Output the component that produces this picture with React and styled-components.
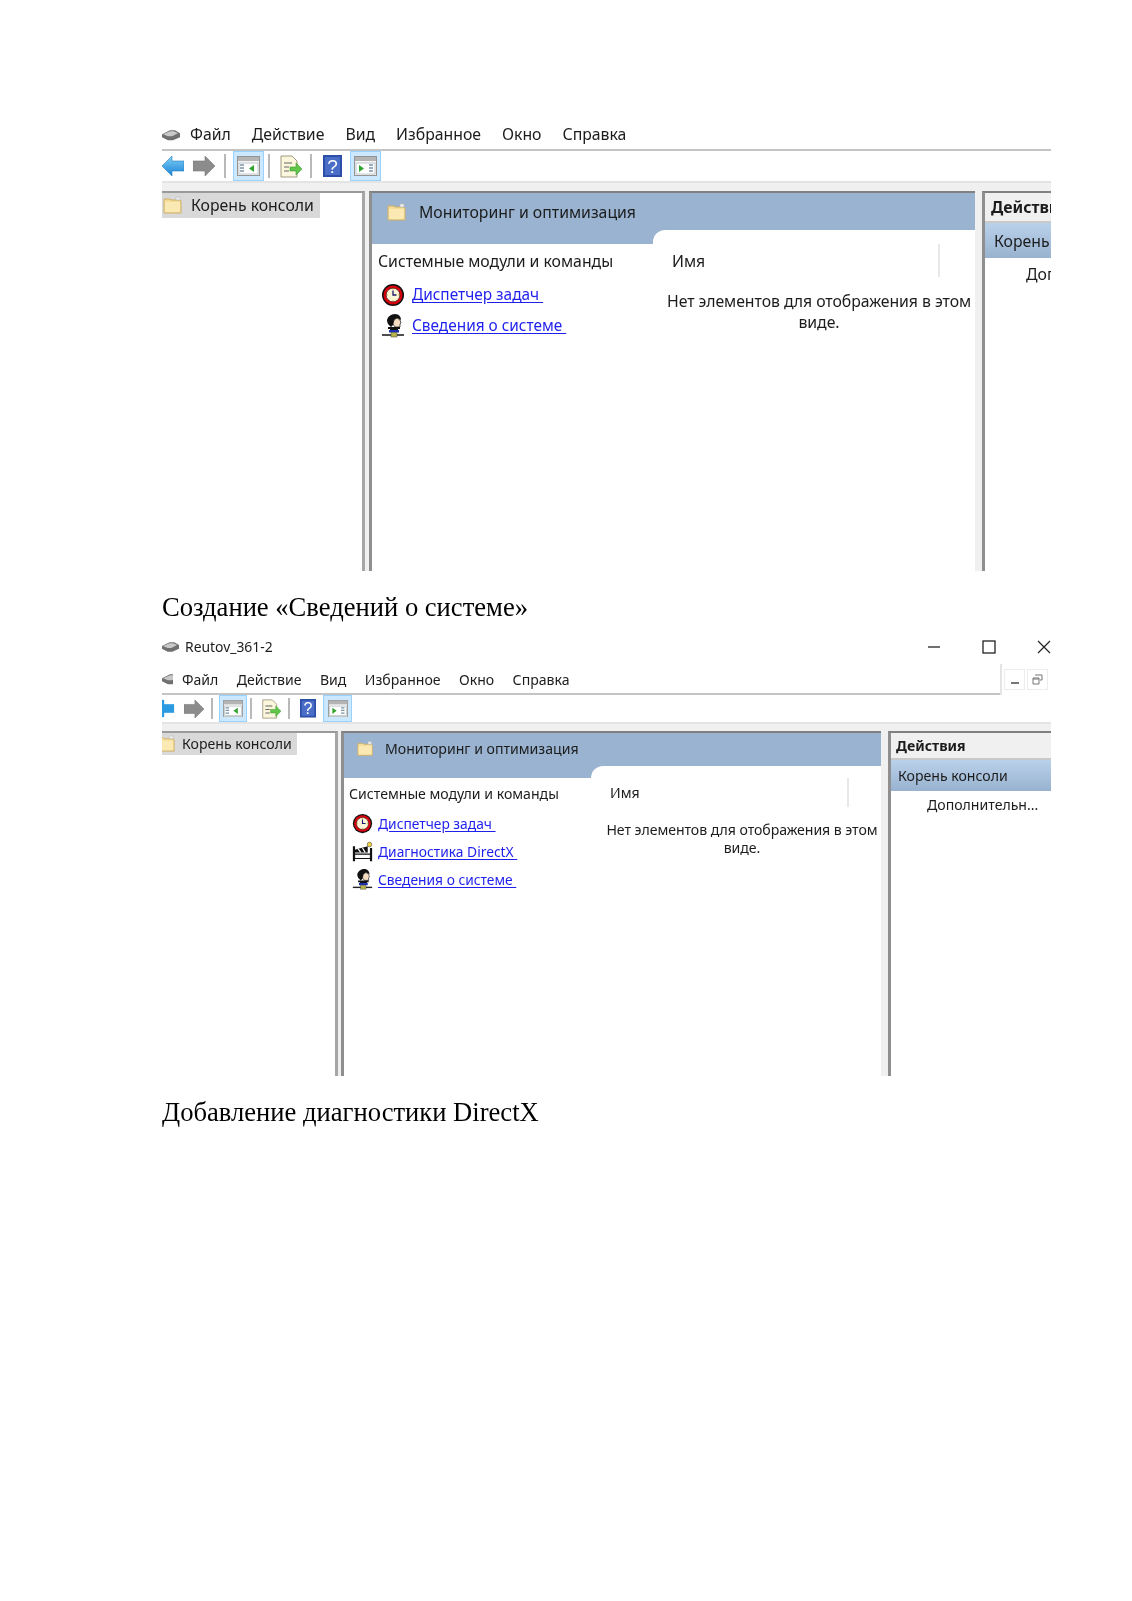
import React from 'react';
import styled, { createGlobalStyle, ThemeProvider } from 'styled-components';

const Global = createGlobalStyle`
  html, body { margin: 0; padding: 0; background: #fff; }
  * { box-sizing: border-box; }
`;

const large = {
  font: 15.8, linkFont: 15.4, menuGap: 21, menuH: 27, menuTop: 0, menuBottom: 3, menuIcon: 18, menuIconGap: 10,
  toolH: 30, bandH: 10, panelH: 380, treeCol: 203, centerCol: 606, gap1: 4, gap2: 7,
  treeW: 158, treeH: 25, treeText: 8, treeFolder: 20, treeFolderLeft: 1,
  headH: 37, headBottom: 0, headLeft: 15, headFolder: 20, headGap: 12, tail: 14, notch: 12,
  listW: 281, listLeft: 6, listTop: 6, sectionH: 22, rowH: 31, rowIcon: 24, rowGap: 7, rowIconLeft: 3, firstRow: 7,
  nameLeft: 19, nameH: 33, nameW: 287, emptyTop: 14, emptyLine: 21, emptyLeft: 10,
  actH: 27, actRowH: 35, actText: 9, actHeadText: 6, moreLeft: 41, moreTop: 5,
};
const small = {
  font: 14.1, linkFont: 13.8, menuGap: 18.4, menuH: 35, menuTop: 6, menuBottom: 0, menuIcon: 11, menuIconGap: 9,
  toolH: 27, bandH: 9, panelH: 345, treeCol: 176, centerCol: 540, gap1: 3, gap2: 7,
  treeW: 135, treeH: 22, treeText: 6, treeFolder: 19, treeFolderLeft: -5,
  headH: 33, headBottom: 3, headLeft: 13, headFolder: 17, headGap: 11, tail: 12, notch: 12,
  listW: 247, listLeft: 5, listTop: 6, sectionH: 20, rowH: 28, rowIcon: 21, rowGap: 5, rowIconLeft: 3, firstRow: 5,
  nameLeft: 19, nameH: 29, nameW: 258, emptyTop: 14, emptyLine: 18, emptyLeft: 12,
  actH: 24, actRowH: 31, actText: 7, actHeadText: 5, moreLeft: 36, moreTop: 4,
};

const Page = styled.div`
  width: 1132px;
  height: 1601px;
  padding: 124px 81px 0 162px;
  background: #fff;
  overflow: hidden;
  font-family: "Noto Sans", "Open Sans", sans-serif;
  filter: blur(0.35px);
`;
const WindowFrame = styled.section`
  width: 889px;
  overflow: hidden;
  color: #1c1c1c;
  font-size: ${p => p.theme.font}px;
`;
const TitleBar = styled.div`
  height: 26px;
  display: flex;
  align-items: center;
  padding-bottom: 1px;
  font-size: 13.9px;
`;
const TitleName = styled.span`
  margin-left: 6px;
  flex: 1;
`;
const CaptionButton = styled.button`
  width: ${p => p.$w}px;
  height: 22px;
  border: 0;
  padding: 0;
  background: none;
  display: flex;
  align-items: center;
  justify-content: ${p => (p.$end ? 'flex-end' : 'center')};
`;
const MenuBar = styled.div`
  height: ${p => p.theme.menuH}px;
  display: flex;
  align-items: center;
  border-bottom: 2px solid #c4c4c4;
  padding: ${p => p.theme.menuTop}px 0 ${p => p.theme.menuBottom}px;
  position: relative;
  line-height: 1.1;
`;
const MenuIcon = styled.span`
  display: flex;
  width: ${p => p.theme.menuIcon}px;
  margin-right: ${p => p.theme.menuIconGap}px;
  overflow: hidden;
`;
const MenuItem = styled.span`
  margin-right: ${p => p.theme.menuGap}px;
  white-space: nowrap;
`;
const MdiBox = styled.div`
  position: absolute;
  right: 0;
  top: 4px;
  bottom: -2px;
  width: 51px;
  background: #fff;
  border-left: 2px solid #e4e4e4;
  display: flex;
  gap: 2px;
  padding: 5px 0 3px 2px;
`;
const MdiBtn = styled.span`
  width: 21px;
  height: 21px;
  border: 1px solid #ececec;
  display: flex;
  align-items: center;
  justify-content: center;
`;
const ToolBar = styled.div`
  height: ${p => p.theme.toolH}px;
  display: flex;
  align-items: center;
`;
const Tool = styled.span`
  display: flex;
  align-items: center;
  justify-content: center;
  flex: none;
  width: ${p => p.$w}px;
  height: 100%;
  margin-left: ${p => p.$ml || 0}px;
  ${p => p.$on && 'background:#cce8ff;border:1px solid #99d1ff;'}
`;
const ToolSep = styled.span`
  flex: none;
  width: 2px;
  height: 80%;
  margin-left: ${p => p.$ml}px;
  background: #a8a8a8;
  opacity: 0.8;
`;
const Band = styled.div`
  height: ${p => p.theme.bandH}px;
  background: #f0f0f0;
  border-top: 2px solid #e4e4e4;
`;
const Panels = styled.div`
  height: ${p => p.theme.panelH}px;
  display: flex;
  background: #f0f0f0;
`;
const TreePane = styled.div`
  flex: none;
  width: ${p => p.theme.treeCol}px;
  background: #fff;
  border-top: 2px solid #9a9a9a;
  border-right: 3px solid #a6a6a6;
`;
const TreeRow = styled.div`
  width: ${p => p.theme.treeW}px;
  height: ${p => p.theme.treeH}px;
  padding-bottom: 2px;
  background: #d9d9d9;
  display: flex;
  align-items: center;
  overflow: hidden;
  white-space: nowrap;
`;
const TreeFolder = styled.span`
  display: flex;
  flex: none;
  margin-left: ${p => p.theme.treeFolderLeft}px;
  margin-right: ${p => p.theme.treeText}px;
`;
const CenterPane = styled.div`
  flex: none;
  width: ${p => p.theme.centerCol}px;
  margin-left: ${p => p.theme.gap1}px;
  background: #fff;
  border-top: 2px solid #808080;
  border-left: 3px solid #8f8f8f;
  display: flex;
  flex-direction: column;
`;
const ViewHead = styled.div`
  height: ${p => p.theme.headH}px;
  flex: none;
  background: #99b3d0;
  display: flex;
  align-items: center;
  padding: 0 0 ${p => p.theme.headBottom}px ${p => p.theme.headLeft}px;
  gap: ${p => p.theme.headGap}px;
`;
const ViewBody = styled.div`
  flex: 1;
  display: flex;
  background: linear-gradient(#99b3d0 ${p => p.theme.tail}px, #fff ${p => p.theme.tail}px);
`;
const ListCol = styled.div`
  flex: none;
  width: ${p => p.theme.listW}px;
`;
const HeadTail = styled.div`
  height: ${p => p.theme.tail}px;
`;
const ListInner = styled.div`
  padding: ${p => p.theme.listTop}px 0 0 ${p => p.theme.listLeft}px;
`;
const SectionTitle = styled.div`
  height: ${p => p.theme.sectionH}px;
  line-height: ${p => p.theme.sectionH}px;
  white-space: nowrap;
  margin-bottom: ${p => p.theme.firstRow}px;
`;
const LinkRow = styled.div`
  height: ${p => p.theme.rowH}px;
  display: flex;
  align-items: center;
  gap: ${p => p.theme.rowGap}px;
  padding-left: ${p => p.theme.rowIconLeft}px;
`;
const IconBox = styled.span`
  display: flex;
  flex: none;
`;
const TaskLink = styled.a`
  color: #1f1fee;
  font-size: ${p => p.theme.linkFont}px;
  text-decoration: underline;
  white-space: pre;
  text-underline-offset: 2px;
`;
const ResultCol = styled.div`
  flex: 1;
  min-width: 0;
  background: #fff;
  border-top-left-radius: ${p => p.theme.notch}px;
  padding-top: ${p => p.theme.tail}px;
`;
const NameHead = styled.div`
  height: ${p => p.theme.nameH}px;
  width: ${p => p.theme.nameW}px;
  padding-left: ${p => p.theme.nameLeft}px;
  border-right: 2px solid #e8e8e8;
  display: flex;
  align-items: center;
`;
const EmptyNote = styled.div`
  margin-top: ${p => p.theme.emptyTop}px;
  padding-left: ${p => p.theme.emptyLeft}px;
  line-height: ${p => p.theme.emptyLine}px;
  letter-spacing: -0.05px;
  text-align: center;
  white-space: nowrap;
`;
const ActionPane = styled.div`
  flex: 1;
  min-width: 0;
  margin-left: ${p => p.theme.gap2}px;
  background: #fff;
  border-top: 2px solid #808080;
  border-left: 3px solid #8f8f8f;
  white-space: nowrap;
  overflow: hidden;
`;
const ActionHead = styled.div`
  height: ${p => p.theme.actH + 3}px;
  border-bottom: 2px solid #c9c9c9;
  background: #f0f0f0;
  font-weight: 700;
  display: flex;
  align-items: center;
  padding-left: ${p => p.theme.actHeadText}px;
`;
const ActionRow = styled.div`
  height: ${p => p.theme.actRowH}px;
  background: linear-gradient(#bad1ea, #98b2cf);
  display: flex;
  align-items: center;
  padding-left: ${p => p.theme.actText}px;
`;
const ActionMore = styled.div`
  padding: ${p => p.theme.moreTop}px 0 0 ${p => p.theme.moreLeft}px;
`;
const PageCaption = styled.p`
  margin: ${p => p.$top}px 0 ${p => p.$bottom}px;
  font-family: "Liberation Serif", "Times New Roman", serif;
  font-size: 26.6px;
  line-height: 30px;
  color: #000;
`;

const Folder = ({ s }) => (
  <svg width={s} height={s} viewBox="0 0 20 20">
    <path d="M1 4h6l1 1h9l1 1v12H1z" fill="#f6dd97" stroke="#cdb06a" />
    <path d="M2 7h15v10H2z" fill="#fbe9b4" />
    <path d="M13 2h4v3h-4z" fill="#eee" stroke="#bbb" strokeWidth=".6" />
  </svg>
);
const Disk = ({ w }) => (
  <svg width={w} height={w * 0.7} viewBox="0 0 18 12" style={{ flex: 'none' }}>
    <path d="M0 5 8 1h5l5 3v4l-7 3H6L0 8z" fill="#6f6f6f" />
    <path d="M1 5l7-3h4l4 2-6 3H6z" fill="#c8c8c8" />
  </svg>
);
const Back = ({ w }) => (
  <svg width={w} height={w} viewBox="0 0 22 22">
    <defs>
      <linearGradient id="bk" x1="0" y1="0" x2="0" y2="1">
        <stop offset="0" stopColor="#7fd0f7" />
        <stop offset="1" stopColor="#1b83d6" />
      </linearGradient>
    </defs>
    <path d="M0 11 10 1v5h12v10H10v5z" fill="url(#bk)" stroke="#2a7fc4" strokeWidth=".6" />
  </svg>
);
const Forward = ({ w }) => (
  <svg width={w} height={w} viewBox="0 0 22 22">
    <path d="M22 11 12 1v5H0v10h12v5z" fill="#8c8c8c" stroke="#777" strokeWidth=".6" />
  </svg>
);
const Pane = ({ w, right }) => (
  <svg width={w} height={w * 0.87} viewBox="0 0 23 20">
    <rect x=".5" y=".5" width="22" height="19" fill="#f4f4f4" stroke="#949494" />
    <rect x="1" y="1" width="21" height="4" fill="#b4b4b4" />
    <rect x="2" y="7" width="19" height="11" fill="#fff" stroke="#a8b4b8" strokeWidth=".7" />
    {right ? (
      <>
        <path d="M5 9v7l5-3.500z" fill="#2fa52f" />
        <path d="M15 9h4M15 12h4M15 15h4" stroke="#7a94a8" strokeWidth="1.500" />
      </>
    ) : (
      <>
        <path d="M3 9h4M3 12h4M3 15h4" stroke="#7a94a8" strokeWidth="1.500" />
        <path d="M17 9v7l-5-3.500z" fill="#2fa52f" />
      </>
    )}
  </svg>
);
const Export = ({ w }) => (
  <svg width={w} height={w} viewBox="0 0 23 23">
    <path d="M2 1h11l5 5v16H2z" fill="#fbf6dc" stroke="#9e9a80" />
    <path d="M5 8h8M5 12h5M5 16h5" stroke="#666" strokeWidth="1.200" />
    <path d="M11 12h6V8l6 6-6 6v-4h-6z" fill="#62c64a" stroke="#3f9a33" strokeWidth=".6" />
  </svg>
);
const Help = ({ w }) => (
  <svg width={w} height={w * 1.16} viewBox="0 0 19 22">
    <rect x="0" y="0" width="19" height="22" fill="#2b4ea8" />
    <rect x="2" y="2" width="15" height="18" fill="#4a6ec8" />
    <text x="9.500" y="17.500" textAnchor="middle" fontFamily="Liberation Sans" fontSize="19" fill="#fff">?</text>
  </svg>
);
const Clock = ({ s }) => (
  <svg width={s} height={s} viewBox="0 0 24 24">
    <circle cx="12" cy="12" r="11" fill="#111" />
    <circle cx="12" cy="12" r="9.500" fill="#d8000c" />
    <circle cx="12" cy="12" r="6.800" fill="#fff6d8" stroke="#222" strokeWidth=".6" />
    <path d="M12 7.500V12h3.500" fill="none" stroke="#1a1a6a" strokeWidth="1.300" />
    <path d="M12 5.800v.8M18 12h-.8M12 18v-.8M6 12h.8" stroke="#c9a400" strokeWidth="1" />
  </svg>
);
const Person = ({ s }) => (
  <svg width={s} height={s} viewBox="0 0 24 24">
    <path d="M6 7C6 3 10 0 14 0c4 0 6 3 6 6l-4-2-3 2v4l-3 3-3-3z" fill="#111" />
    <path d="M13 6l3-2 3 2 1 3-1 1v3h-5l-2-3z" fill="#f4ddc0" stroke="#111" strokeWidth=".7" />
    <path d="M7 13h12v2h-2v2H9v-2H7z" fill="#111" />
    <path d="M8 16h10v2.500H8z" fill="#1c2fb0" />
    <path d="M1 21h22" stroke="#222" strokeWidth="1.600" />
    <rect x="10" y="18.500" width="6" height="4.500" fill="#b7b24a" stroke="#444" strokeWidth=".5" />
  </svg>
);
const DirectX = ({ s }) => (
  <svg width={s} height={s} viewBox="0 0 24 24">
    <path d="M1 6h2.500v17H1zM20.500 8H23v15h-2.500z" fill="#111" />
    <path d="M3 15h18v5H3z" fill="#fff" stroke="#111" strokeWidth="1.200" />
    <path d="M3 10 18 6v7H3z" fill="#111" />
    <path d="M7 9l3 4M12 8l3 5" stroke="#fff" strokeWidth="1.400" />
    <circle cx="20" cy="4" r="2.600" fill="#f2d33c" stroke="#333" strokeWidth=".6" />
  </svg>
);

const MENU = ['Файл', 'Действие', 'Вид', 'Избранное', 'Окно', 'Справка'];

const Console = ({ metrics, title, links, tools, children }) => (
  <ThemeProvider theme={metrics}>
    <WindowFrame>
      {title}
      <MenuBar>
        <MenuIcon><Disk w={18} /></MenuIcon>
        {MENU.map(m => <MenuItem key={m}>{m}</MenuItem>)}
        {children}
      </MenuBar>
      <ToolBar>{tools}</ToolBar>
      <Band />
      <Panels>
        <TreePane>
          <TreeRow>
            <TreeFolder><Folder s={metrics.treeFolder} /></TreeFolder>
            Корень консоли
          </TreeRow>
        </TreePane>
        <CenterPane>
          <ViewHead>
            <Folder s={metrics.headFolder} />
            <span>Мониторинг и оптимизация</span>
          </ViewHead>
          <ViewBody>
            <ListCol>
              <HeadTail />
              <ListInner>
                <SectionTitle>Системные модули и команды</SectionTitle>
                {links.map(([Icon, label]) => (
                  <LinkRow key={label}>
                    <IconBox><Icon s={metrics.rowIcon} /></IconBox>
                    <TaskLink>{label + ' '}</TaskLink>
                  </LinkRow>
                ))}
              </ListInner>
            </ListCol>
            <ResultCol>
              <NameHead>Имя</NameHead>
              <EmptyNote>Нет элементов для отображения в этом<br />виде.</EmptyNote>
            </ResultCol>
          </ViewBody>
        </CenterPane>
        <ActionPane>
          <ActionHead>Действия</ActionHead>
          <ActionRow>Корень консоли</ActionRow>
          <ActionMore>Дополнительн...</ActionMore>
        </ActionPane>
      </Panels>
    </WindowFrame>
  </ThemeProvider>
);

const toolsLarge = (
  <>
    <Tool $w={22}><Back w={22} /></Tool>
    <Tool $w={22} $ml={9}><Forward w={22} /></Tool>
    <ToolSep $ml={9} />
    <Tool $w={31} $ml={7} $on><Pane w={23} /></Tool>
    <ToolSep $ml={4} />
    <Tool $w={23} $ml={9}><Export w={23} /></Tool>
    <ToolSep $ml={8} />
    <Tool $w={19} $ml={11}><Help w={19} /></Tool>
    <Tool $w={31} $ml={8} $on><Pane w={23} right /></Tool>
  </>
);
const toolsSmall = (
  <>
    <Tool $w={13}><svg width="13" height="19" viewBox="9 0 13 22"><path d="M9 6h13v10H9z" fill="#2b9ae0" /><path d="M9 1v20" stroke="#2b9ae0" strokeWidth="3" /></svg></Tool>
    <Tool $w={21} $ml={8}><Forward w={20} /></Tool>
    <ToolSep $ml={7} />
    <Tool $w={28} $ml={6} $on><Pane w={20} /></Tool>
    <ToolSep $ml={3} />
    <Tool $w={20} $ml={9}><Export w={20} /></Tool>
    <ToolSep $ml={7} />
    <Tool $w={16} $ml={10}><Help w={16} /></Tool>
    <Tool $w={29} $ml={7} $on><Pane w={20} right /></Tool>
  </>
);

const WindowTitle = (
  <TitleBar>
    <Disk w={17} />
    <TitleName>Reutov_361-2</TitleName>
    <CaptionButton $w={55}>
      <svg width="14" height="14" viewBox="0 0 14 14"><path d="M1 7h12" stroke="#222" strokeWidth="1.300" /></svg>
    </CaptionButton>
    <CaptionButton $w={55}>
      <svg width="14" height="14" viewBox="0 0 14 14"><rect x="1" y="1" width="12" height="12" fill="none" stroke="#222" strokeWidth="1.300" /></svg>
    </CaptionButton>
    <CaptionButton $w={35} $end>
      <svg width="14" height="14" viewBox="0 0 14 14"><path d="M1 1l12 12M13 1 1 13" stroke="#222" strokeWidth="1.200" /></svg>
    </CaptionButton>
  </TitleBar>
);

export default function App() {
  return (
    <>
      <Global />
      <Page>
        <Console
          metrics={large}
          tools={toolsLarge}
          links={[[Clock, 'Диспетчер задач'], [Person, 'Сведения о системе']]}
        />
        <PageCaption $top={21} $bottom={12}>Создание «Сведений о системе»</PageCaption>
        <Console
          metrics={small}
          title={WindowTitle}
          tools={toolsSmall}
          links={[[Clock, 'Диспетчер задач'], [DirectX, 'Диагностика DirectX'], [Person, 'Сведения о системе']]}
        >
          <MdiBox>
            <MdiBtn><svg width="10" height="10" viewBox="0 0 10 10"><path d="M1 8h8" stroke="#777" strokeWidth="2" /></svg></MdiBtn>
            <MdiBtn><svg width="11" height="11" viewBox="0 0 11 11"><path d="M3 1h7v5H8M1 4h6v6H1zM1 5h6" fill="none" stroke="#777" /></svg></MdiBtn>
          </MdiBox>
        </Console>
        <PageCaption $top={21} $bottom={0}>Добавление диагностики DirectX</PageCaption>
      </Page>
    </>
  );
}
